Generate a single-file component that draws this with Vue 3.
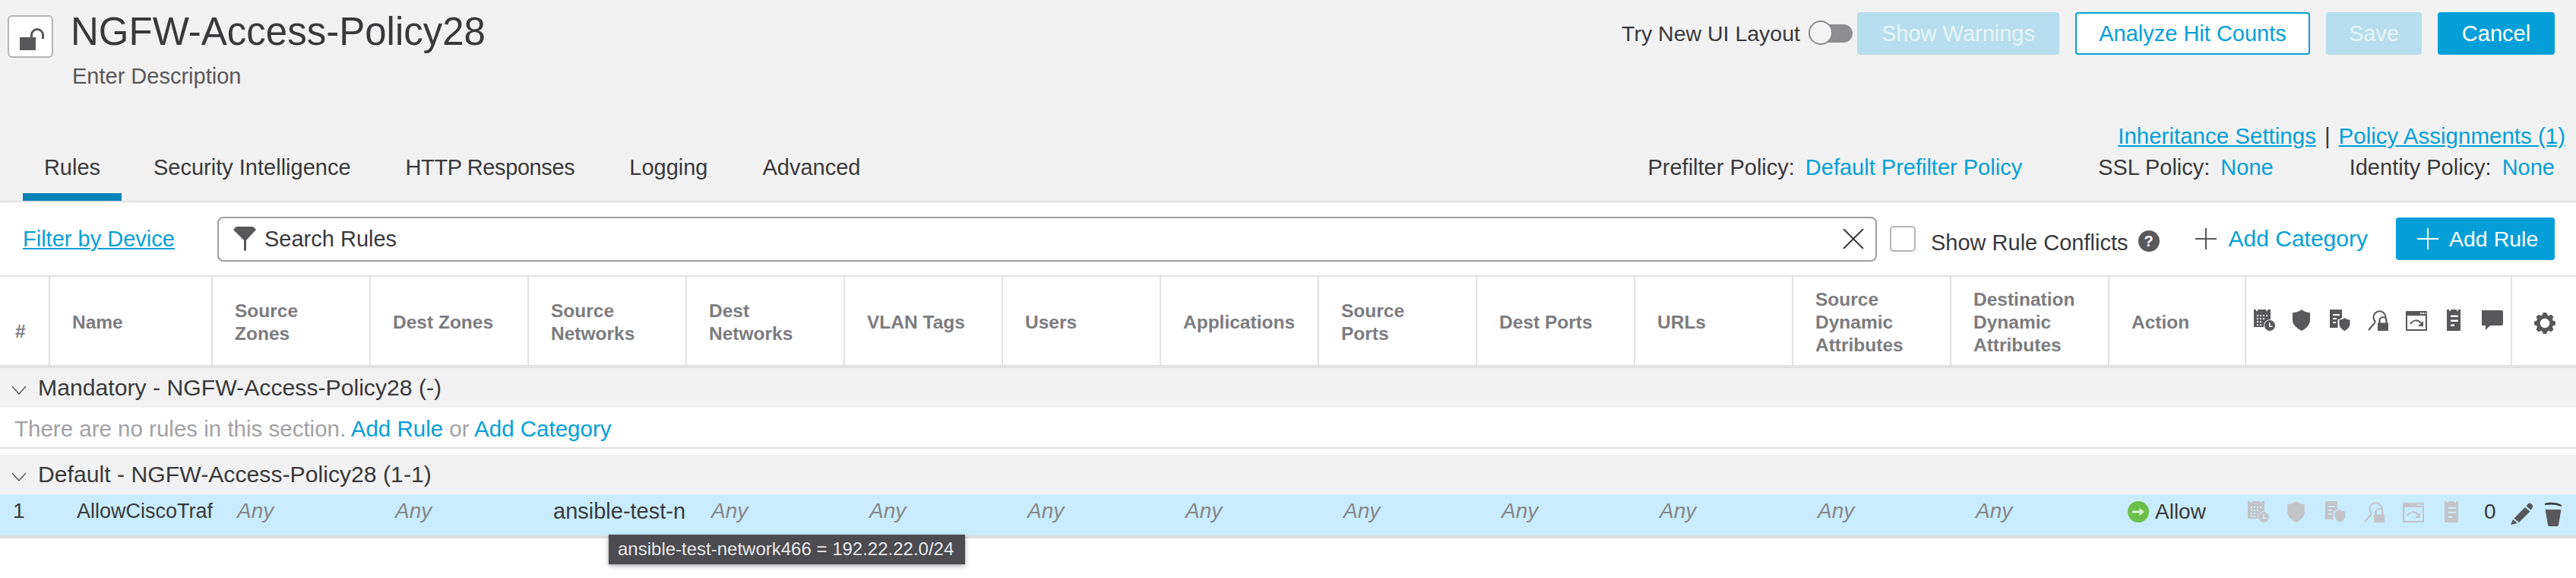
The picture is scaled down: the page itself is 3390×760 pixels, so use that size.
<template>
  <div class="page">
    <svg class="defs" width="0" height="0">
      <symbol id="i-cal" viewBox="0 0 28 28">
        <path fill-rule="evenodd" d="M0 0h3v2h2V0h11v2h2V0h4v13a8.500 8.500 0 0 0-8.800 10H0zM4 7h2v2H4zM8 7h2v2H8zM12 7h2v2h-2zM16 7h2v2h-2zM4 11h2v2H4zM8 11h2v2H8zM12 11h2v2h-2zM4 15h2v2H4zM8 15h2v2H8zM4 19h2v2H4zM8 19h2v2H8z"/>
        <path fill-rule="evenodd" d="M21 14a7 7 0 1 1-.01 0zM20 17v6h4.500v-1.500H21.500V17z"/>
      </symbol>
      <symbol id="i-shield" viewBox="0 0 28 28">
        <path d="M13 0c3 2.500 7 4 11 4.200V14c0 6-5 11-11 14C7 25 1 20 1 14V4.200C5 4 10 2.500 13 0z"/>
      </symbol>
      <symbol id="i-docshield" viewBox="0 0 28 28">
        <path fill-rule="evenodd" d="M0 0h16v11c-2 1.300-3.500 1.800-5.500 2v11H0zM4 6h9v2H4zM4 11h5v2H4zM4 16h4v2H4z"/>
        <path d="M19.500 11c2 1.600 4.500 2.500 7 2.600V19c0 4-3 7-7 9-4-2-7-5-7-9v-5.400c2.500-.1 5-1 7-2.600z"/>
      </symbol>
      <symbol id="i-locksearch" viewBox="0 0 28 28">
        <path d="M10.500 16.500A8 8 0 1 1 23.500 11" fill="none" stroke="currentColor" stroke-width="2"/>
        <path d="M9.500 17 1 27" fill="none" stroke="currentColor" stroke-width="2"/>
        <path d="M15.500 18v-3.500a4.500 4.500 0 0 1 9 0V18" fill="none" stroke="currentColor" stroke-width="2.200"/>
        <path d="M13 17.500h14V28H13z"/>
      </symbol>
      <symbol id="i-window" viewBox="0 0 28 28">
        <path fill-rule="evenodd" d="M1 2h26q1 0 1 1v24q0 1-1 1H1q-1 0-1-1V3q0-1 1-1zM2 8v18h24V8zM19 4h2v2h-2zM22 4h2v2h-2zM25 4h1.500v2H25z"/>
        <path d="M6 19c4-6 10-6 14-1" fill="none" stroke="currentColor" stroke-width="2"/>
        <path d="M23 15v7h-7z"/>
      </symbol>
      <symbol id="i-notes" viewBox="0 0 28 28">
        <path fill-rule="evenodd" d="M4 0h3v2h2V0h8v2h2V0h3v28H4zM9 7.500V10h10V7.500zM9 13.500V16h10v-2.500zM9 19.500V22h5v-2.500z"/>
      </symbol>
      <symbol id="i-comment" viewBox="0 0 28 28">
        <path d="M0 1h26q2 0 2 2v16q0 2-2 2H11l-6 6v-6H0q-2 0-2-2V3q0-2 2-2z"/>
      </symbol>
      <symbol id="i-gear" viewBox="0 0 28 28">
        <circle cx="14" cy="14" r="8.500" fill="none" stroke="currentColor" stroke-width="4.500"/>
        <path v-for="a in gearAngles" :key="a" d="M12 0h4l2.500 5h-9z" :transform="`rotate(${a} 14 14)`"/>
      </symbol>
    </svg>

    <header class="head">
      <div class="top-row">
        <div class="title-wrap">
          <button class="lock-btn">
            <svg width="36" height="32" viewBox="0 0 36 32">
              <rect x="4" y="14" width="21" height="17" fill="#58585b"/>
              <path d="M19.500 14v-3a7.500 7.500 0 0 1 15 0v5" fill="none" stroke="#58585b" stroke-width="3"/>
            </svg>
          </button>
          <div>
            <h1 class="title">NGFW-Access-Policy28</h1>
            <div class="desc">Enter Description</div>
          </div>
        </div>
        <div class="actions">
          <span class="try">Try New UI Layout</span>
          <span class="toggle"><span class="knob"></span></span>
          <button class="btn disabled warn">Show Warnings</button>
          <button class="btn outline">Analyze Hit Counts</button>
          <button class="btn disabled save">Save</button>
          <button class="btn primary cancel">Cancel</button>
        </div>
      </div>
      <div class="links-row">
        <a class="link u">Inheritance Settings</a>
        <span class="pipe">|</span>
        <a class="link u">Policy Assignments (1)</a>
      </div>
      <div class="tabs-row">
        <nav class="tabs">
          <a v-for="(t, i) in tabs" :key="t" class="tab" :class="{ active: i === 0 }">{{ t }}</a>
        </nav>
        <div class="policies">
          <span class="policy" v-for="p in policies" :key="p.label">
            <span>{{ p.label }}</span><a class="link">{{ p.value }}</a>
          </span>
        </div>
      </div>
    </header>

    <div class="toolbar">
      <a class="link u filter">Filter by Device</a>
      <div class="search">
        <svg class="funnel" width="30" height="32" viewBox="0 0 30 32">
          <path d="M4 0h22l4 4-13 14v13a2 2 0 0 1-3 0V18L0 4z" fill="#58585b"/>
        </svg>
        <span class="search-text">Search Rules</span>
        <svg class="clear" width="28" height="26" viewBox="0 0 28 26">
          <path d="M1 0l26 26M27 0L1 26" stroke="#39393b" stroke-width="2" fill="none"/>
        </svg>
      </div>
      <span class="check"></span>
      <span class="conflicts">Show Rule Conflicts</span>
      <span class="help">?</span>
      <svg class="add-plus" width="28" height="28" viewBox="0 0 28 28">
        <path d="M14 0v28M0 14h28" stroke="#58585b" stroke-width="2" fill="none"/>
      </svg>
      <a class="link add-cat">Add Category</a>
      <button class="btn primary add-rule">
        <svg width="28" height="28" viewBox="0 0 28 28">
          <path d="M14 0v28M0 14h28" stroke="#fff" stroke-width="2" fill="none"/>
        </svg>
        Add Rule
      </button>
    </div>

    <div class="table">
      <div class="grid thead">
        <div class="th hash">#</div>
        <div class="th" v-for="c in columns" :key="c">{{ c }}</div>
        <div class="th icons-cell">
          <svg v-for="ic in headIcons" :key="ic" class="ico"><use :href="'#' + ic" /></svg>
        </div>
        <div class="th gear-cell"><svg class="ico"><use href="#i-gear" /></svg></div>
      </div>

      <div class="band">
        <svg class="chev" width="20" height="12" viewBox="0 0 20 12"><path d="M1 1l9 10 9-10" fill="none" stroke="#58585b" stroke-width="1.500"/></svg>
        Mandatory - NGFW-Access-Policy28 (-)
      </div>
      <div class="empty">
        There are no rules in this section. <a class="link">Add Rule</a> or <a class="link">Add Category</a>
      </div>
      <div class="band second">
        <svg class="chev" width="20" height="12" viewBox="0 0 20 12"><path d="M1 1l9 10 9-10" fill="none" stroke="#58585b" stroke-width="1.500"/></svg>
        Default - NGFW-Access-Policy28 (1-1)
      </div>

      <div class="grid row">
        <div class="td num">1</div>
        <div class="td name">AllowCiscoTraf</div>
        <div class="td" v-for="(c, i) in rowCells" :key="i" :class="c === 'Any' ? 'any' : 'net'">{{ c }}</div>
        <div class="td action">
          <svg width="28" height="28" viewBox="0 0 28 28">
            <circle cx="14" cy="14" r="14" fill="#6cc04a"/>
            <path d="M6 12.500h9.500V9l6.500 5-6.500 5v-3.500H6z" fill="#d9f2d0"/>
          </svg>
          <span class="allow">Allow</span>
        </div>
        <div class="td row-icons">
          <svg v-for="ic in rowIcons" :key="ic" class="ico"><use :href="'#' + ic" /></svg>
          <span class="count">0</span>
        </div>
        <div class="td row-tools">
          <svg width="30" height="30" viewBox="0 0 30 30">
            <path d="M23 2.500q2-2 4 0l1.500 1.500q1.500 2 0 4l-2 2.500-6-5z" fill="#58585b"/>
            <path d="M19 7l6.500 5.500L11 27l-6.500-5.500z" fill="#58585b"/>
            <path d="M3 23l6 5-9 2z" fill="#58585b"/>
          </svg>
          <svg width="24" height="32" viewBox="0 0 24 32">
            <path d="M1 2C6 0 17 0 23 4l-.5 2C16 3 7 3 1 4z" fill="#39393b"/>
            <path d="M1.500 10h21l-3.500 20q-.3 2-2 2H7q-1.700 0-2-2z" fill="#58585b"/>
          </svg>
        </div>
      </div>
      <div class="tip">ansible-test-network466 = 192.22.22.0/24</div>
    </div>
  </div>
</template>

<script setup>
const tabs = ['Rules', 'Security Intelligence', 'HTTP Responses', 'Logging', 'Advanced']
const policies = [
  { label: 'Prefilter Policy:', value: 'Default Prefilter Policy' },
  { label: 'SSL Policy:', value: 'None' },
  { label: 'Identity Policy:', value: 'None' }
]
const columns = [
  'Name', 'Source\nZones', 'Dest Zones', 'Source\nNetworks', 'Dest\nNetworks', 'VLAN Tags', 'Users',
  'Applications', 'Source\nPorts', 'Dest Ports', 'URLs', 'Source\nDynamic\nAttributes',
  'Destination\nDynamic\nAttributes', 'Action'
]
const rowCells = ['Any', 'Any', 'ansible-test-network466', 'Any', 'Any', 'Any', 'Any', 'Any', 'Any', 'Any', 'Any', 'Any']
const rowIcons = ['i-cal', 'i-shield', 'i-docshield', 'i-locksearch', 'i-window', 'i-notes']
const headIcons = [...rowIcons, 'i-comment']
const gearAngles = [0, 45, 90, 135, 180, 225, 270, 315]
</script>

<style scoped>
.page {
  width: 3390px;
  height: 760px;
  overflow: hidden;
  font-family: "Liberation Sans", Arial, sans-serif;
  font-size: 28px;
  color: #39393b;
  background: #fff;
}
.defs {
  position: absolute;
}
.link {
  color: #049fd9;
}
.u {
  text-decoration: underline;
}

.head {
  height: 266px;
  box-sizing: border-box;
  background: #f2f2f2;
  border-bottom: 2px solid #e1e1e1;
}
.top-row {
  display: flex;
  justify-content: space-between;
  height: 162px;
  padding: 16px 28px 0 10px;
  box-sizing: border-box;
}
.title-wrap {
  display: flex;
  align-items: flex-start;
  gap: 23px;
}
.lock-btn {
  width: 60px;
  height: 56px;
  margin-top: 4px;
  padding: 8px 0 0;
  background: #fff;
  border: 2px solid #b4b4b6;
  border-radius: 6px;
}
.title {
  margin: 0;
  font-size: 51px;
  font-weight: 400;
  line-height: 44px;
  color: #39393b;
  padding-top: 4px;
}
.desc {
  margin: 20px 0 0 2px;
  font-size: 29px;
  line-height: 32px;
  color: #58585b;
}
.actions {
  display: flex;
  align-items: flex-start;
}
.try {
  font-size: 28.500px;
  line-height: 56px;
  margin-right: 11px;
}
.toggle {
  position: relative;
  width: 58px;
  height: 24px;
  margin: 16px 6px 0 0;
  background: #8e8e91;
  border-radius: 12px;
}
.knob {
  position: absolute;
  left: 0;
  top: -5px;
  width: 32px;
  height: 32px;
  box-sizing: border-box;
  background: #f4f4f4;
  border: 2px solid #8e8e91;
  border-radius: 50%;
}
.btn {
  height: 56px;
  font: inherit;
  font-size: 29px;
  border-radius: 4px;
  padding: 0;
}
.disabled {
  background: #b7deee;
  border: 0;
  color: #e8f5fa;
}
.primary {
  background: #049fd9;
  border: 0;
  color: #fff;
}
.outline {
  background: #fff;
  border: 2px solid #049fd9;
  color: #049fd9;
}
.warn {
  width: 266px;
}
.actions .outline {
  width: 309px;
  margin-left: 21px;
}
.save {
  width: 126px;
  margin-left: 21px;
}
.cancel {
  width: 154px;
  margin-left: 21px;
}

.links-row {
  display: flex;
  justify-content: flex-end;
  align-items: center;
  gap: 11px;
  height: 34px;
  padding-right: 14px;
  font-size: 29.500px;
}
.tabs-row {
  display: flex;
  justify-content: space-between;
  height: 68px;
  padding-right: 28px;
  font-size: 29px;
}
.tabs {
  display: flex;
  gap: 12px;
  padding-left: 30px;
}
.tab {
  padding: 8px 30px 0;
  line-height: 32px;
}
.tab.active {
  width: 130px;
  box-sizing: border-box;
  padding: 8px 0 0;
  text-align: center;
  border-bottom: 10px solid #0083b6;
}
.tab:nth-child(3) {
  letter-spacing: -0.400px;
}
.policies {
  display: flex;
  gap: 100px;
  line-height: 32px;
  padding-top: 8px;
}
.policy {
  display: flex;
  gap: 14px;
}

.toolbar {
  display: flex;
  align-items: center;
  height: 96px;
  box-sizing: border-box;
  padding: 0 28px 0 30px;
  font-size: 29px;
}
.filter {
  width: 256px;
  flex: none;
}
.search {
  display: flex;
  align-items: center;
  width: 2184px;
  height: 59px;
  flex: none;
  box-sizing: border-box;
  padding: 0 15px 0 19px;
  border: 2px solid #9e9ea2;
  border-radius: 8px;
}
.search-text {
  margin-left: 11px;
  flex: 1;
}
.check {
  width: 34px;
  height: 34px;
  flex: none;
  box-sizing: border-box;
  margin-left: 17px;
  border: 2px solid #b4b4b6;
  border-radius: 5px;
  background: #fff;
}
.conflicts {
  margin: 10px 0 0 20px;
  white-space: nowrap;
}
.help {
  width: 28px;
  height: 28px;
  margin: 6px 0 0 13px;
  flex: none;
  background: #58585b;
  color: #fff;
  border-radius: 50%;
  font-size: 20px;
  font-weight: 700;
  line-height: 28px;
  text-align: center;
}
.add-plus {
  margin-left: 47px;
  flex: none;
}
.add-cat {
  margin-left: 16px;
  font-size: 30px;
  white-space: nowrap;
}
.add-rule {
  display: flex;
  align-items: center;
  gap: 14px;
  width: 209px;
  height: 56px;
  margin-left: auto;
  padding-left: 28px;
  flex: none;
  font-size: 28.500px;
  white-space: nowrap;
}

.table {
  position: relative;
  border-top: 2px solid #e1e1e1;
}
.grid {
  display: grid;
  grid-template-columns: 64px 214px repeat(12, 208px) 180px 350px 86px;
}
.thead {
  height: 120px;
  border-bottom: 4px solid #e1e1e1;
  box-sizing: border-box;
}
.th {
  display: flex;
  align-items: center;
  box-sizing: border-box;
  padding: 3px 0 0 29px;
  border-left: 2px solid #e1e1e1;
  font-size: 24.500px;
  font-weight: 700;
  line-height: 30px;
  color: #7c7c80;
  white-space: pre-line;
}
.hash {
  border-left: 0;
  padding: 28px 0 0 20px;
}
.icons-cell {
  gap: 22px;
  padding: 43px 0 0 10px;
  align-items: flex-start;
}
.gear-cell {
  padding: 0 0 0 29px;
  color: #39393b;
}
.ico {
  width: 28px;
  height: 28px;
  flex: none;
  fill: #58585b;
  color: #58585b;
  overflow: visible;
}
.gear-cell .ico {
  margin-top: 6px;
}

.band {
  display: flex;
  align-items: center;
  gap: 15px;
  height: 52px;
  padding-left: 15px;
  background: #f2f2f2;
  font-size: 30.200px;
}
.chev {
  margin-top: 6px;
  flex: none;
}
.second {
  margin-top: 8px;
}
.empty {
  height: 54px;
  box-sizing: border-box;
  padding: 11px 0 0 19px;
  font-size: 29.500px;
  line-height: 34px;
  color: #a2a2a5;
  border-bottom: 2px solid #e1e1e1;
}
.row {
  height: 58px;
  box-sizing: border-box;
  background: #c9edff;
  border-bottom: 4px solid #dedede;
}
.td {
  padding: 6px 0 0 34px;
  line-height: 32px;
  overflow: hidden;
  white-space: nowrap;
}
.num {
  padding-left: 17px;
}
.name {
  padding: 6px 0 0 37px;
  font-size: 27px;
  overflow: visible;
}
.net {
  font-size: 29px;
}
.any {
  font-style: italic;
  color: #86868a;
}
.action {
  display: flex;
  align-items: flex-start;
  gap: 8px;
  padding: 9px 0 0 26px;
  line-height: 26px;
}
.allow {
  margin-top: 1px;
}
.row-icons {
  display: flex;
  align-items: flex-start;
  gap: 23px;
  padding: 9px 0 0 4px;
}
.row-icons .ico {
  fill: #c3c4c9;
  color: #c3c4c9;
}
.count {
  margin: -2px 0 0 5px;
}
.row-tools {
  display: flex;
  align-items: flex-start;
  gap: 14px;
  padding: 10px 0 0 0;
  overflow: visible;
}
.tip {
  position: absolute;
  left: 801px;
  top: 339px;
  width: 469px;
  height: 39px;
  box-sizing: border-box;
  padding-left: 12px;
  background: #4b4b50;
  color: #e8e8ea;
  font-size: 24px;
  line-height: 38px;
  white-space: nowrap;
  box-shadow: 0 2px 6px rgba(0, 0, 0, 0.35);
}
</style>
